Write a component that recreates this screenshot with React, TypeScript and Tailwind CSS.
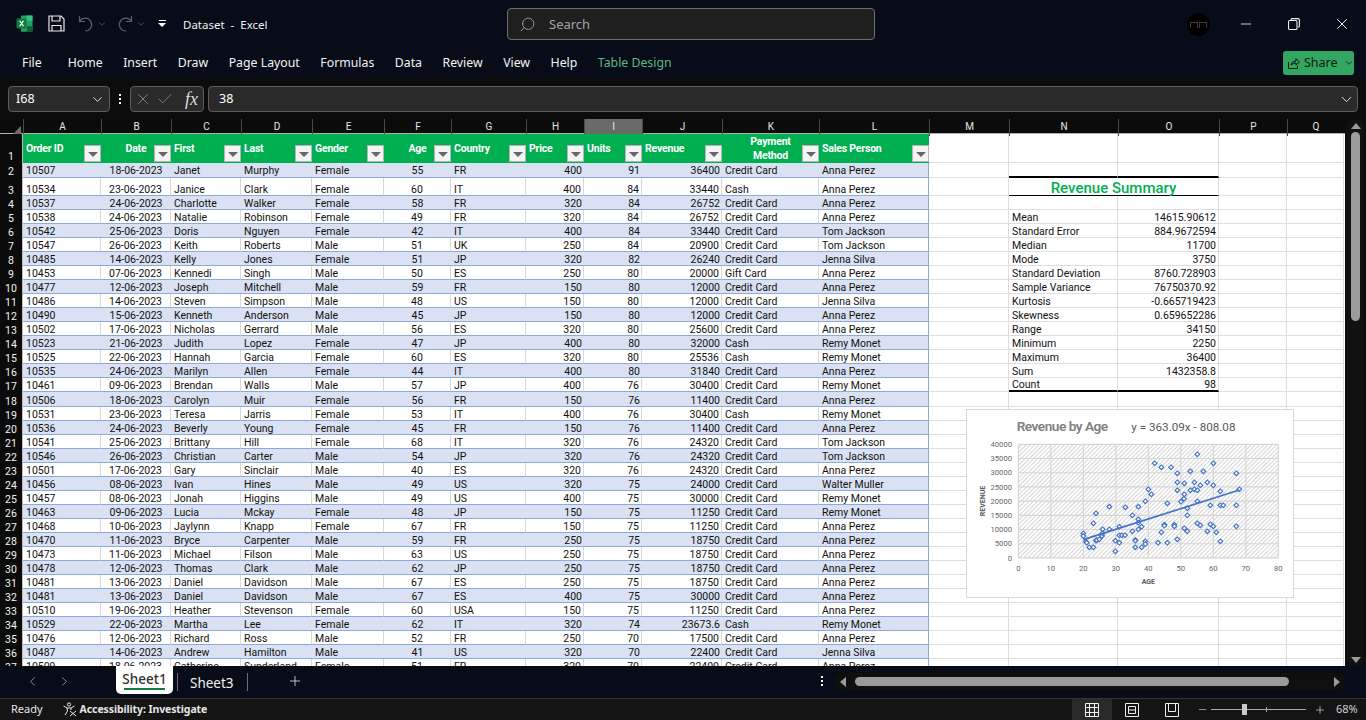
import { Search, ChevronDown, ChevronLeft, ChevronRight, Plus, X, Check, Minus } from "lucide-react"

const CC = "Credit Card"
const rows: string[][] = [
  ["2", "10507", "18-06-2023", "Janet", "Murphy", "Female", "55", "FR", "400", "91", "36400", CC, "Anna Perez"],
  ["3", "10534", "23-06-2023", "Janice", "Clark", "Female", "60", "IT", "400", "84", "33440", "Cash", "Anna Perez"],
  ["4", "10537", "24-06-2023", "Charlotte", "Walker", "Female", "58", "FR", "320", "84", "26752", CC, "Anna Perez"],
  ["5", "10538", "24-06-2023", "Natalie", "Robinson", "Female", "49", "FR", "320", "84", "26752", CC, "Anna Perez"],
  ["6", "10542", "25-06-2023", "Doris", "Nguyen", "Female", "42", "IT", "400", "84", "33440", CC, "Tom Jackson"],
  ["7", "10547", "26-06-2023", "Keith", "Roberts", "Male", "51", "UK", "250", "84", "20900", CC, "Tom Jackson"],
  ["8", "10485", "14-06-2023", "Kelly", "Jones", "Female", "51", "JP", "320", "82", "26240", CC, "Jenna Silva"],
  ["9", "10453", "07-06-2023", "Kennedi", "Singh", "Male", "50", "ES", "250", "80", "20000", "Gift Card", "Anna Perez"],
  ["10", "10477", "12-06-2023", "Joseph", "Mitchell", "Male", "59", "FR", "150", "80", "12000", CC, "Anna Perez"],
  ["11", "10486", "14-06-2023", "Steven", "Simpson", "Male", "48", "US", "150", "80", "12000", CC, "Jenna Silva"],
  ["12", "10490", "15-06-2023", "Kenneth", "Anderson", "Male", "45", "JP", "150", "80", "12000", CC, "Anna Perez"],
  ["13", "10502", "17-06-2023", "Nicholas", "Gerrard", "Male", "56", "ES", "320", "80", "25600", CC, "Anna Perez"],
  ["14", "10523", "21-06-2023", "Judith", "Lopez", "Female", "47", "JP", "400", "80", "32000", "Cash", "Remy Monet"],
  ["15", "10525", "22-06-2023", "Hannah", "Garcia", "Female", "60", "ES", "320", "80", "25536", "Cash", "Remy Monet"],
  ["16", "10535", "24-06-2023", "Marilyn", "Allen", "Female", "44", "IT", "400", "80", "31840", CC, "Anna Perez"],
  ["17", "10461", "09-06-2023", "Brendan", "Walls", "Male", "57", "JP", "400", "76", "30400", CC, "Remy Monet"],
  ["18", "10506", "18-06-2023", "Carolyn", "Muir", "Female", "56", "FR", "150", "76", "11400", CC, "Anna Perez"],
  ["19", "10531", "23-06-2023", "Teresa", "Jarris", "Female", "53", "IT", "400", "76", "30400", "Cash", "Remy Monet"],
  ["20", "10536", "24-06-2023", "Beverly", "Young", "Female", "45", "FR", "150", "76", "11400", CC, "Anna Perez"],
  ["21", "10541", "25-06-2023", "Brittany", "Hill", "Female", "68", "IT", "320", "76", "24320", CC, "Tom Jackson"],
  ["22", "10546", "26-06-2023", "Christian", "Carter", "Male", "54", "JP", "320", "76", "24320", CC, "Tom Jackson"],
  ["23", "10501", "17-06-2023", "Gary", "Sinclair", "Male", "40", "ES", "320", "76", "24320", CC, "Anna Perez"],
  ["24", "10456", "08-06-2023", "Ivan", "Hines", "Male", "49", "US", "320", "75", "24000", CC, "Walter Muller"],
  ["25", "10457", "08-06-2023", "Jonah", "Higgins", "Male", "49", "US", "400", "75", "30000", CC, "Remy Monet"],
  ["26", "10463", "09-06-2023", "Lucia", "Mckay", "Female", "48", "JP", "150", "75", "11250", CC, "Remy Monet"],
  ["27", "10468", "10-06-2023", "Jaylynn", "Knapp", "Female", "67", "FR", "150", "75", "11250", CC, "Anna Perez"],
  ["28", "10470", "11-06-2023", "Bryce", "Carpenter", "Male", "59", "FR", "250", "75", "18750", CC, "Anna Perez"],
  ["29", "10473", "11-06-2023", "Michael", "Filson", "Male", "63", "US", "250", "75", "18750", CC, "Anna Perez"],
  ["30", "10478", "12-06-2023", "Thomas", "Clark", "Male", "62", "JP", "250", "75", "18750", CC, "Anna Perez"],
  ["31", "10481", "13-06-2023", "Daniel", "Davidson", "Male", "67", "ES", "250", "75", "18750", CC, "Anna Perez"],
  ["32", "10481", "13-06-2023", "Daniel", "Davidson", "Male", "67", "ES", "400", "75", "30000", CC, "Anna Perez"],
  ["33", "10510", "19-06-2023", "Heather", "Stevenson", "Female", "60", "USA", "150", "75", "11250", CC, "Anna Perez"],
  ["34", "10529", "22-06-2023", "Martha", "Lee", "Female", "62", "IT", "320", "74", "23673.6", "Cash", "Remy Monet"],
  ["35", "10476", "12-06-2023", "Richard", "Ross", "Male", "52", "FR", "250", "70", "17500", CC, "Anna Perez"],
  ["36", "10487", "14-06-2023", "Andrew", "Hamilton", "Male", "41", "US", "320", "70", "22400", CC, "Jenna Silva"],
  ["37", "10509", "18-06-2023", "Catherine", "Sunderland", "Female", "51", "FR", "320", "70", "22400", CC, "Anna Perez"],
]

const summary: Record<string, [string, string]> = {
  "5": ["Mean", "14615.90612"],
  "6": ["Standard Error", "884.9672594"],
  "7": ["Median", "11700"],
  "8": ["Mode", "3750"],
  "9": ["Standard Deviation", "8760.728903"],
  "10": ["Sample Variance", "76750370.92"],
  "11": ["Kurtosis", "-0.665719423"],
  "12": ["Skewness", "0.659652286"],
  "13": ["Range", "34150"],
  "14": ["Minimum", "2250"],
  "15": ["Maximum", "36400"],
  "16": ["Sum", "1432358.8"],
  "17": ["Count", "98"],
}

const points = [
  [370, 400], [370, 408], [378, 425], [380, 428], [388, 442], [400, 442], [400, 370], [408, 340], [408, 422], [410, 420],
  [418, 418], [426, 408], [428, 400], [428, 388], [448, 388], [448, 320], [466, 422], [466, 454], [478, 428], [478, 380],
  [478, 406], [486, 406], [495, 406], [496, 322], [517, 394], [517, 346], [526, 420], [526, 442], [526, 422], [535, 320],
  [535, 358], [535, 368], [535, 388], [545, 380], [545, 442], [556, 424], [556, 432], [556, 304], [565, 268], [574, 283],
  [584, 190], [594, 428], [604, 202], [604, 397], [613, 374], [613, 377], [622, 310], [622, 428], [633, 202], [643, 374],
  [643, 379], [652, 220], [652, 247], [652, 271], [652, 418], [663, 305], [672, 296], [673, 283], [673, 250], [673, 385],
  [682, 394], [682, 346], [682, 325], [691, 214], [691, 271], [703, 247], [703, 268], [712, 163], [712, 271], [712, 304],
  [712, 370], [721, 256], [721, 376], [730, 214], [742, 247], [742, 394], [751, 316], [751, 373], [760, 190], [760, 256],
  [760, 379], [769, 397], [781, 274], [781, 316], [781, 424], [790, 316], [829, 220], [829, 316], [829, 379], [838, 268],
]

const gridCols =
  "grid grid-cols-[23px_78px_70px_70px_71px_72px_67px_75px_58px_58px_80px_97px_110px_80px_109px_101px_68px_57px]"

const colLetters = ["A", "B", "C", "D", "E", "F", "G", "H", "I", "J", "K", "L", "M", "N", "O", "P", "Q"]
const headers = ["Order ID", "Date", "First", "Last", "Gender", "Age", "Country", "Price", "Units", "Revenue", "Payment Method", "Sales Person"]
const centered = [1, 5, 10]
const tabs = ["Home", "Insert", "Draw", "Page Layout", "Formulas", "Data", "Review", "View", "Help"]

function FilterButton() {
  return (
    <span className="absolute right-0 bottom-[1px] w-[17px] h-[17px] bg-[#f4f4f4] border border-[#b5b5b5] flex items-center justify-center">
      <span className="w-0 h-0 border-l-[5px] border-r-[5px] border-t-[5px] border-l-transparent border-r-transparent border-t-[#666666] mt-[1px]" />
    </span>
  )
}

function SheetRow({ row }: { row: string[] }) {
  const n = row[0]
  const band = Number(n) % 2 === 0
  const height = n === "2" || n === "18" ? "h-[15px]" : n === "3" ? "h-[18px]" : "h-[14px]"
  const sum = summary[n]
  const lead = n === "2" ? "leading-[13px]" : "leading-[11px]"
  const cellBase = `flex items-end ${lead} whitespace-nowrap overflow-hidden border-b border-[#8ea9db]`
  const blank = "border-r border-b border-[#dedede]"
  const rule = n === "2" || n === "17" ? "border-b-2 border-b-black" : ""
  return (
    <div className={`${gridCols} ${height}`}>
      <div className={`bg-[#0b0b0b] text-[#f2f2f2] border-r border-[#bdbdbd] flex items-end justify-center ${lead}`}>{n}</div>
      {row.slice(1).map((v, i) => {
        const align = i === 1 || i === 5 ? "justify-center px-[2px]" : i === 7 || i === 8 || i === 9 ? "justify-end px-[2px]" : "pl-[3px]"
        const edge = i === 11 ? "border-r border-r-[#8ea9db]" : band ? "" : "border-r border-r-[#d9d9d9]"
        return (
          <div key={i} className={`${cellBase} ${band ? "bg-[#d9e1f2]" : "bg-white"} ${align} ${edge}`}>
            {v}
          </div>
        )
      })}
      <div className={blank} />
      {n === "3" ? (
        <div className="col-span-2 flex items-end justify-center border-r border-b border-[#dedede] border-b-black text-[15px] leading-[14px] font-medium text-[#00b050]">
          Revenue Summary
        </div>
      ) : (
        <>
          <div className={`${blank} ${rule} flex items-end px-[3px] ${lead}`}>{sum?.[0]}</div>
          <div className={`${blank} ${rule} flex items-end justify-end px-[2px] ${lead}`}>{sum?.[1]}</div>
        </>
      )}
      <div className={blank} />
      <div className={blank} />
    </div>
  )
}

function ExcelLogo() {
  return (
    <svg width="17" height="17" viewBox="0 0 17 17">
      <rect x="5" y="0.5" width="11.5" height="16" rx="1" fill="#21a366" />
      <rect x="10.7" y="0.5" width="5.8" height="5.3" fill="#33c481" />
      <rect x="5" y="5.8" width="5.7" height="5.4" fill="#107c41" />
      <rect x="10.7" y="11.2" width="5.8" height="5.3" fill="#185c37" />
      <rect x="5" y="11.2" width="5.7" height="5.3" fill="#21a366" />
      <rect x="0.5" y="3.5" width="10" height="10" rx="1" fill="#107c41" />
      <path d="M3 5.8 L5 8.5 L3 11.2 H4.5 L5.6 9.5 L6.7 11.2 H8.2 L6.2 8.5 L8.2 5.8 H6.7 L5.6 7.5 L4.5 5.8 Z" fill="#ffffff" />
    </svg>
  )
}

function UndoIcon({ flip }: { flip?: boolean }) {
  return (
    <svg className={flip ? "-scale-x-100" : ""} width="16" height="17" viewBox="0 0 16 17" fill="none" stroke="#5f5f5f" strokeWidth="1.2">
      <path d="M1.5 1 V6.5 H7" />
      <path d="M1.8 6.2 A6.4 6.4 0 1 1 7 16" />
    </svg>
  )
}

function Chart() {
  const yLabels = [40000, 35000, 30000, 25000, 20000, 15000, 10000, 5000, 0]
  const xLabels = [0, 10, 20, 30, 40, 50, 60, 70, 80]
  return (
    <svg width="340" height="205" viewBox="0 0 1020 615">
      <defs>
        <pattern id="hatch" width="9" height="9" patternUnits="userSpaceOnUse" patternTransform="rotate(45)">
          <rect width="9" height="9" fill="#ffffff" />
          <line x1="0" y1="0" x2="0" y2="9" stroke="#b8b8b8" strokeWidth="3.5" />
        </pattern>
      </defs>
      <rect x="175" y="133" width="780" height="341" fill="url(#hatch)" />
      {yLabels.map((v, i) => {
        const y = 133 + i * 42.6
        return (
          <g key={v}>
            <line x1="175" x2="955" y1={y} y2={y} stroke="#d6d6d6" strokeWidth="3.5" />
            <text x="156" y={y + 8} textAnchor="end" fontSize="23" fill="#666666">{v}</text>
          </g>
        )
      })}
      {xLabels.map((v, i) => {
        const x = 175 + i * 97.5
        return (
          <g key={v}>
            <line x1={x} x2={x} y1="133" y2="474" stroke="#d6d6d6" strokeWidth="3.5" />
            <text x={x} y="512" textAnchor="middle" fontSize="23" fill="#666666">{v}</text>
          </g>
        )
      })}
      {points.map(([x, y], i) => (
        <rect key={i} x={x - 5} y={y - 5} width="10" height="10" transform={`rotate(45 ${x} ${y})`} fill="#ffffff" stroke="#4472c4" strokeWidth="3.5" />
      ))}
      <line x1="370" y1="419" x2="838" y2="270" stroke="#4472c4" strokeWidth="5" />
      <text x="170" y="94" fontSize="41" fontWeight="600" fill="#7f7f7f" letterSpacing="-1.5">Revenue by Age</text>
      <text x="514" y="92" fontSize="35" fill="#595959">y = 363.09x - 808.08</text>
      <text x="565" y="552" textAnchor="middle" fontSize="21" fontWeight="700" fill="#595959">AGE</text>
      <text x="76" y="303" textAnchor="middle" fontSize="21" fontWeight="700" fill="#595959" transform="rotate(-90 76 303)">REVENUE</text>
    </svg>
  )
}

export default function App() {
  return (
    <div className="w-[1366px] h-[720px] overflow-hidden flex flex-col bg-[#070c18] text-white font-['Noto_Sans',sans-serif]">
      {/* title bar */}
      <div className="h-[47px] flex items-center relative">
        <div className="ml-[16px]"><ExcelLogo /></div>
        <svg className="ml-[15px]" width="17" height="17" viewBox="0 0 17 17" fill="none" stroke="#e8e8e8" strokeWidth="1.2">
          <path d="M1 1 H13 L16 4 V16 H1 Z" />
          <path d="M4 1 V6 H12 V1 M4 16 V10.5 H13 V16" />
        </svg>
        <div className="ml-[13px]"><UndoIcon /></div>
        <ChevronDown className="ml-[3px] text-[#5f5f5f]" size={10} />
        <div className="ml-[10px]"><UndoIcon flip /></div>
        <ChevronDown className="ml-[3px] text-[#5f5f5f]" size={10} />
        <div className="ml-[12px] flex flex-col items-center gap-[2px]">
          <span className="w-[7px] h-[1px] bg-white" />
          <span className="w-0 h-0 border-l-[4px] border-r-[4px] border-t-[4px] border-l-transparent border-r-transparent border-t-white" />
        </div>
        <span className="ml-[17px] mt-[2px] text-[11.5px] whitespace-pre text-[#f0f0f0]">Dataset  -  Excel</span>
        <div className="absolute left-[507px] top-[8px] w-[368px] h-[32px] rounded-[4px] border border-[#6e6e6e] bg-[#1f1f1f] flex items-center pl-[11px]">
          <Search className="-scale-x-100 text-[#a8a8a8]" size={17} strokeWidth={1.2} />
          <span className="ml-[13px] mt-[1px] text-[13px] text-[#a3a3a3]">Search</span>
        </div>
        <div className="absolute left-[1187px] top-[13px] w-[23px] h-[23px] rounded-full bg-black flex items-center justify-center gap-[1px]">
          <span className="w-[8px] h-[6px] border-t border-x border-[#3a3a3a]" />
          <span className="w-[8px] h-[6px] border-t border-x border-[#3a3a3a]" />
        </div>
        <Minus className="absolute left-[1238px] top-[16px] text-[#f0f0f0]" size={16} strokeWidth={1.3} />
        <svg className="absolute left-[1288px] top-[18px]" width="12" height="12" viewBox="0 0 12 12" fill="none" stroke="#f0f0f0" strokeWidth="1.1">
          <rect x="0.5" y="2.5" width="8.5" height="9" rx="1.2" />
          <path d="M3 2.5 V1.7 Q3 0.6 4.2 0.6 H10 Q11.4 0.6 11.4 2 V8 Q11.4 9 10 9" />
        </svg>
        <X className="absolute left-[1333px] top-[15px] text-[#f0f0f0]" size={18} strokeWidth={1.3} />
      </div>

      {/* ribbon tabs */}
      <div className="h-[31px] flex items-center text-[12.3px] text-[#f2f2f2]">
        <span className="ml-[22px] mr-[26px] mt-[2px]">File</span>
        <div className="flex gap-[20.5px] mt-[2px]">
          {tabs.map((t) => (
            <span key={t}>{t}</span>
          ))}
          <span className="text-[#5fb784]">Table Design</span>
        </div>
        <div className="ml-auto mr-[12px] w-[71px] h-[24px] rounded-[3px] bg-[#33a661] text-[#0d1a12] flex items-center pl-[5px] gap-[4px]">
          <svg width="12" height="12" viewBox="0 0 12 12" fill="none" stroke="#0d1a12" strokeWidth="1">
            <path d="M0.5 5 V11.5 H9.5 V8.5" />
            <path d="M3 8 Q3.5 4 8 4 V1.5 L11.5 5 L8 8 V6 Q5 6 3 8 Z" />
          </svg>
          <span className="text-[12.5px] mt-[2px]">Share</span>
          <ChevronDown className="ml-[2px]" size={10} />
        </div>
      </div>

      {/* formula bar */}
      <div className="h-[41px] bg-[#0c0c0c] flex items-center pt-[1px] pl-[8px] pr-[8px] text-[12.5px]">
        <div className="w-[102px] h-[26px] rounded-[4px] border border-[#5c5c5c] bg-[#2a2a2a] flex items-center justify-between pl-[7px] pr-[4px]">
          <span>I68</span>
          <ChevronDown size={15} strokeWidth={1.6} className="text-[#e0e0e0]" />
        </div>
        <div className="w-[20px] flex flex-col items-center gap-[2px]">
          <span className="w-[2px] h-[2px] bg-white" />
          <span className="w-[2px] h-[2px] bg-white" />
          <span className="w-[2px] h-[2px] bg-white" />
        </div>
        <div className="w-[74px] h-[26px] rounded-[4px] border border-[#5c5c5c] bg-[#2a2a2a] flex items-center pl-[3px]">
          <X size={18} strokeWidth={1.2} className="text-[#8a8a8a]" />
          <Check size={18} strokeWidth={1.2} className="ml-[4px] text-[#8a8a8a]" />
          <span className="ml-[11px] font-['Liberation_Serif',serif] italic text-[18px] text-[#dcdcdc]">fx</span>
        </div>
        <div className="ml-[4px] flex-1 h-[26px] rounded-[4px] border border-[#5c5c5c] bg-[#2a2a2a] flex items-center justify-between pl-[10px] pr-[2px]">
          <span>38</span>
          <ChevronDown size={17} strokeWidth={1.4} className="text-[#e0e0e0]" />
        </div>
      </div>

      {/* sheet */}
      <div className="h-[547px] flex overflow-hidden bg-[#0c0c0c]">
        <div className="w-[1345px] relative overflow-hidden bg-white text-[10.5px] text-[#111111] font-['Roboto',sans-serif]">
          <div className={`${gridCols} h-[14px] bg-[#0b0b0b] text-[#e6e6e6] text-[10px] leading-[15px] text-center`}>
            <div className="flex items-end justify-end pr-[2px] pb-[1px]">
              <svg width="9" height="9" viewBox="0 0 9 9">
                <polygon points="9,0 9,9 0,9" fill="#6e6e6e" />
              </svg>
            </div>
            {colLetters.map((c) => (
              <div key={c} className={`border-l border-[#4a4a4a] ${c === "I" ? "bg-[#6a6a6a] border-b-2 border-b-[#107c41]" : ""}`}>{c}</div>
            ))}
          </div>
          <div className={`${gridCols} h-[30px] border-t border-[#b0b0b0]`}>
            <div className="bg-[#0b0b0b] text-[#f2f2f2] border-r border-[#bdbdbd] flex items-end justify-center leading-[13px]">1</div>
            {headers.map((h, i) => (
              <div
                key={h}
                className={`relative bg-[#00b050] text-white font-bold tracking-[-0.2px] leading-[14px] flex items-center ${centered.includes(i) ? "justify-center text-center px-[2px]" : "pl-[3px]"}`}
              >
                <span className={i === 10 ? "w-[60px]" : ""}>{h}</span>
                <FilterButton />
              </div>
            ))}
            <div className="border-r border-b border-[#dedede]" />
            <div className="border-r border-b border-[#dedede]" />
            <div className="border-r border-b border-[#dedede]" />
            <div className="border-r border-b border-[#dedede]" />
            <div className="border-r border-b border-[#dedede]" />
          </div>
          {rows.map((r) => (
            <SheetRow key={r[0]} row={r} />
          ))}
          <div className="absolute left-[966px] top-[290px] w-[328px] h-[189px] bg-white border border-[#d9d9d9] overflow-hidden">
            <div className="-ml-[7px] -mt-[10px]">
              <Chart />
            </div>
          </div>
        </div>
        {/* vertical scrollbar */}
        <div className="flex-1 mx-[2px] rounded-full bg-[#111111] flex flex-col items-center pt-[4px] pb-[3px]">
          <span className="w-0 h-0 border-l-[5px] border-r-[5px] border-b-[6px] border-l-transparent border-r-transparent border-b-[#9b9b9b]" />
          <span className="mt-[3px] w-[9px] h-[189px] rounded-full bg-[#9b9b9b]" />
          <span className="mt-auto w-0 h-0 border-l-[5px] border-r-[5px] border-t-[6px] border-l-transparent border-r-transparent border-t-[#9b9b9b]" />
        </div>
      </div>

      {/* sheet tabs */}
      <div className="h-[32px] flex items-start relative text-[13.5px]">
        <ChevronLeft className="ml-[25px] mt-[8px] text-[#9a9a9a]" size={15} strokeWidth={1.4} />
        <ChevronRight className="ml-[17px] mt-[8px] text-[#9a9a9a]" size={15} strokeWidth={1.4} />
        <div className="ml-[44px] w-[57px] h-[28px] rounded-b-[5px] bg-white text-[#333333] flex flex-col items-center">
          <span className="mt-[4px] leading-[18px] font-medium">Sheet1</span>
          <span className="w-[41px] h-[2px] bg-[#107c41]" />
        </div>
        <span className="ml-[4px] mt-[7px] w-[1px] h-[18px] bg-[#6e6e6e]" />
        <span className="ml-[12px] mt-[7px] leading-[20px] text-[#f0f0f0]">Sheet3</span>
        <span className="ml-[13px] mt-[7px] w-[1px] h-[18px] bg-[#6e6e6e]" />
        <Plus className="ml-[39px] mt-[7px] text-[#e8e8e8]" size={16} strokeWidth={1.2} />
        <div className="absolute left-[821px] top-[10px] flex flex-col gap-[2px]">
          <span className="w-[2px] h-[2px] bg-white" />
          <span className="w-[2px] h-[2px] bg-white" />
          <span className="w-[2px] h-[2px] bg-white" />
        </div>
        <div className="absolute left-[835px] top-[7px] w-[511px] h-[17px] rounded-full bg-[#0f0f0f] flex items-center pl-[5px] pr-[4px]">
          <span className="w-0 h-0 border-t-[5px] border-b-[5px] border-r-[6px] border-t-transparent border-b-transparent border-r-[#9b9b9b]" />
          <span className="ml-[9px] w-[434px] h-[9px] rounded-full bg-[#9b9b9b]" />
          <span className="ml-auto mr-[2px] w-0 h-0 border-t-[5px] border-b-[5px] border-l-[6px] border-t-transparent border-b-transparent border-l-[#9b9b9b]" />
        </div>
      </div>

      {/* status bar */}
      <div className="h-[22px] bg-[#141414] border-t border-[#333333] flex items-center text-[11px] text-[#e6e6e6]">
        <span className="ml-[11px]">Ready</span>
        <svg className="ml-[19px]" width="15" height="15" viewBox="0 0 15 15" fill="none" stroke="#e6e6e6" strokeWidth="1">
          <circle cx="7" cy="2.5" r="1.6" />
          <path d="M1.5 4 L5 6 H9 L12.5 4 M5 6 L5.5 9 L3 13 M9 6 V8 M8 14 L14 9 M8 9 L14 14" />
        </svg>
        <span className="ml-[3px] font-bold text-[10.5px] tracking-[-0.1px]">Accessibility: Investigate</span>
        <div className="ml-auto w-[40px] h-[21px] bg-[#2a2a2a] flex items-center justify-center">
          <svg width="14" height="14" viewBox="0 0 14 14" fill="none" stroke="#f0f0f0" strokeWidth="1">
            <path d="M.5.5H13.5V13.5H.5ZM.5 4.5H13.5M.5 9.5H13.5M4.5.5V13.5M9.5.5V13.5" />
          </svg>
        </div>
        <div className="w-[40px] flex justify-center">
          <svg width="14" height="14" viewBox="0 0 14 14" fill="none" stroke="#f0f0f0" strokeWidth="1">
            <path d="M.5.5H13.5V13.5H.5ZM3.5 3.5H10.5V10.5H3.5ZM3.5 7H10.5" />
          </svg>
        </div>
        <div className="w-[40px] flex justify-center">
          <svg width="14" height="14" viewBox="0 0 14 14" fill="none" stroke="#f0f0f0" strokeWidth="1">
            <path d="M.5.5H13.5V13.5H.5ZM3.5.5V8.5H10.5V.5" />
          </svg>
        </div>
        <Minus className="ml-[5px] text-[#e6e6e6]" size={11} strokeWidth={1.3} />
        <div className="ml-[3px] w-[95px] h-[1px] bg-[#a8a8a8] relative">
          <span className="absolute left-[31px] -top-[5px] w-[5px] h-[11px] bg-[#c8c8c8]" />
          <span className="absolute left-[55px] -top-[2px] w-[1px] h-[5px] bg-[#a8a8a8]" />
        </div>
        <Plus className="ml-[8px] text-[#e6e6e6]" size={12} strokeWidth={1.3} />
        <span className="ml-[10px] mr-[8px] w-[22px] whitespace-nowrap text-[#d0d0d0]">68%</span>
      </div>
    </div>
  )
}
